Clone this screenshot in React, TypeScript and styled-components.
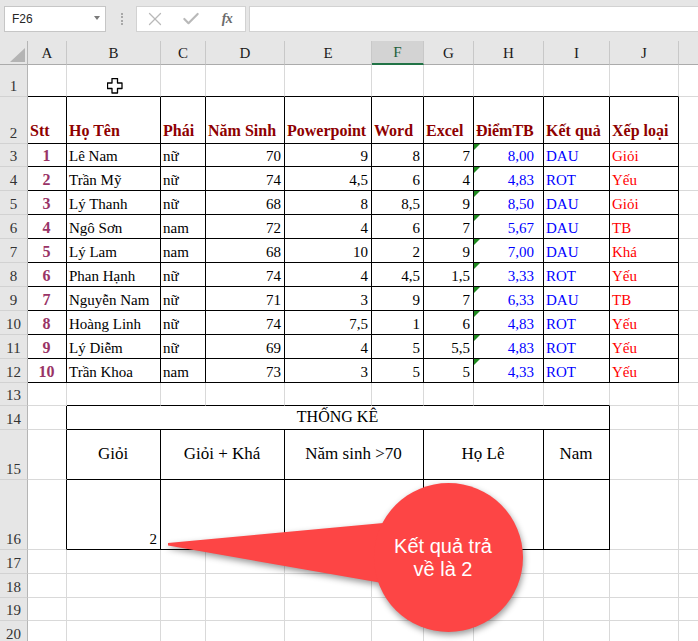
import React from 'react';
import styled, { createGlobalStyle } from 'styled-components';
import { X, Check } from 'lucide-react';

const GRID = '#d9d9d9';
const INK = '#000000';

const COLS = [28, 39, 94, 45, 79, 87, 52, 50, 70, 66, 69, 60];
const LETTERS = ['A', 'B', 'C', 'D', 'E', 'F', 'G', 'H', 'I', 'J', ''];
const ROW_HEIGHTS = [32, 47, 23, 24, 24, 24, 24, 24, 24, 24, 24, 24, 23, 24, 50, 70, 24, 24, 23, 24];

const GlobalStyle = createGlobalStyle`
  html, body { margin: 0; padding: 0; background: #fff; overflow: hidden; }
`;

const Screen = styled.div`
  position: relative;
  width: 698px;
  height: 641px;
  overflow: hidden;
  background: #fff;
  font-family: "Liberation Serif", "Times New Roman", serif;
`;

const TopBar = styled.div`
  height: 41px;
  box-sizing: border-box;
  background: #e6e6e6;
  display: flex;
  align-items: flex-start;
  padding: 6px 0 0 4px;
`;

const NameBox = styled.div`
  width: 102px;
  height: 26px;
  box-sizing: border-box;
  flex: none;
  background: #fff;
  border: 1px solid #c6c6c6;
  display: flex;
  align-items: center;
  justify-content: space-between;
  padding: 0 5px 0 7px;
  font-family: "Liberation Sans", Arial, sans-serif;
  font-size: 12px;
  color: #262626;
`;

const DropArrow = styled.span`
  width: 0;
  height: 0;
  border-left: 3.5px solid transparent;
  border-right: 3.5px solid transparent;
  border-top: 4px solid #7a7a7a;
  margin-top: -2px;
`;

const Dots = styled.span`
  flex: none;
  width: 0;
  height: 12px;
  margin: 7px 13px 0 15px;
  border-left: 2px dotted #a8a8a8;
`;

const FxBox = styled.div`
  flex: none;
  width: 110px;
  height: 26px;
  box-sizing: border-box;
  background: #fff;
  border: 1px solid #d2d2d2;
  display: flex;
  align-items: center;
`;

const FxButton = styled.span`
  width: 36px;
  display: flex;
  justify-content: center;
  align-items: center;
  color: #b9b9b9;
`;

const FxLabel = styled.span`
  font-family: "Liberation Serif", "Times New Roman", serif;
  font-style: italic;
  font-weight: bold;
  font-size: 14px;
  color: #6b6b6b;
  letter-spacing: -0.5px;
`;

const FormulaInput = styled.div`
  flex: 1;
  height: 26px;
  box-sizing: border-box;
  margin-left: 3px;
  background: #fff;
  border: 1px solid #d2d2d2;
  border-right: none;
`;

const Sheet = styled.div`
  display: grid;
  grid-template-columns: ${COLS.map((w) => `${w}px`).join(' ')};
  grid-template-rows: 24px ${ROW_HEIGHTS.map((h) => `${h}px`).join(' ')};
`;

const Corner = styled.div`
  position: relative;
  box-sizing: border-box;
  background: #e6e6e6;
  border-right: 1px solid #b5b5b5;
  border-bottom: 1px solid #ababab;
  &::after {
    content: '';
    position: absolute;
    right: 2px;
    bottom: 2px;
    width: 0;
    height: 0;
    border-left: 15px solid transparent;
    border-bottom: 14px solid #b4b4b4;
  }
`;

const ColHead = styled.div<{ $active?: boolean }>`
  box-sizing: border-box;
  display: flex;
  align-items: center;
  justify-content: center;
  background: ${(p) => (p.$active ? '#d3d3d3' : '#e6e6e6')};
  border-right: 1px solid #c8c8c8;
  border-bottom: ${(p) => (p.$active ? '2px solid #217346' : '1px solid #ababab')};
  font-size: 15px;
  color: ${(p) => (p.$active ? '#1d5f3a' : '#1a1a1a')};
  padding-top: 1px;
`;

const RowHead = styled.div`
  box-sizing: border-box;
  display: flex;
  align-items: flex-end;
  justify-content: center;
  background: #e6e6e6;
  border-right: 1px solid #b5b5b5;
  border-bottom: 1px solid #d2d2d2;
  font-size: 15px;
  line-height: 18px;
  padding-bottom: 1px;
  color: #333;
`;

type Tone = 'plain' | 'head' | 'stt' | 'blue' | 'red' | 'score';
type Align = 'left' | 'right' | 'center';

const TONE_COLOR: Record<Tone, string> = {
  plain: '#000',
  head: '#8e0000',
  stt: '#993366',
  blue: '#0000ff',
  red: '#ff0000',
  score: '#0000ff',
};

const Cell = styled.div<{
  $span: number;
  $right: string;
  $bottom: string;
  $align: Align;
  $middle: boolean;
  $tone: Tone;
  $size?: number;
}>`
  grid-column: span ${(p) => p.$span};
  position: relative;
  box-sizing: border-box;
  min-width: 0;
  display: flex;
  align-items: ${(p) => (p.$middle ? 'center' : 'flex-end')};
  justify-content: ${(p) =>
    p.$align === 'right' ? 'flex-end' : p.$align === 'center' ? 'center' : 'flex-start'};
  border-right: 1px solid ${(p) => p.$right};
  border-bottom: 1px solid ${(p) => p.$bottom};
  padding: 0 ${(p) => (p.$tone === 'score' ? 9 : 3)}px ${(p) => (p.$tone === 'head' ? 3 : 1)}px 2px;
  font-size: ${(p) => p.$size ?? (p.$tone === 'head' || p.$tone === 'stt' ? 16 : 15)}px;
  font-weight: ${(p) => (p.$tone === 'head' || p.$tone === 'stt' ? 'bold' : 'normal')};
  line-height: 18px;
  color: ${(p) => TONE_COLOR[p.$tone]};
  white-space: nowrap;
  background: #fff;
`;

const ErrMark = styled.span`
  position: absolute;
  top: 0;
  left: 0;
  width: 0;
  height: 0;
  border-top: 6px solid #1f8a1f;
  border-right: 6px solid transparent;
`;

const CursorMark = styled.svg`
  position: absolute;
  left: 40px;
  top: 13px;
`;

const CalloutLayer = styled.div`
  position: absolute;
  inset: 0;
  pointer-events: none;
`;

const CalloutShape = styled.svg`
  position: absolute;
  left: 0;
  top: 0;
  filter: drop-shadow(1px 3px 3px rgba(0, 0, 0, 0.4));
`;

const CalloutText = styled.div`
  position: absolute;
  left: 363px;
  top: 535px;
  width: 160px;
  text-align: center;
  font-family: "Liberation Sans", Arial, sans-serif;
  font-size: 20px;
  line-height: 23px;
  color: #ffffff;
`;

interface Spec {
  text?: string;
  span?: number;
  align?: Align;
  middle?: boolean;
  tone?: Tone;
  size?: number;
  err?: boolean;
  cursor?: boolean;
}

const STUDENTS: string[][] = [
  ['1', 'Lê Nam', 'nữ', '70', '9', '8', '7', '8,00', 'DAU', 'Giỏi'],
  ['2', 'Trần Mỹ', 'nữ', '74', '4,5', '6', '4', '4,83', 'ROT', 'Yếu'],
  ['3', 'Lý Thanh', 'nữ', '68', '8', '8,5', '9', '8,50', 'DAU', 'Giỏi'],
  ['4', 'Ngô Sơn', 'nam', '72', '4', '6', '7', '5,67', 'DAU', 'TB'],
  ['5', 'Lý Lam', 'nam', '68', '10', '2', '9', '7,00', 'DAU', 'Khá'],
  ['6', 'Phan Hạnh', 'nữ', '74', '4', '4,5', '1,5', '3,33', 'ROT', 'Yếu'],
  ['7', 'Nguyễn Nam', 'nữ', '71', '3', '9', '7', '6,33', 'DAU', 'TB'],
  ['8', 'Hoàng Linh', 'nữ', '74', '7,5', '1', '6', '4,83', 'ROT', 'Yếu'],
  ['9', 'Lý Diễm', 'nữ', '69', '4', '5', '5,5', '4,83', 'ROT', 'Yếu'],
  ['10', 'Trần Khoa', 'nam', '73', '3', '5', '5', '4,33', 'ROT', 'Yếu'],
];

const HEADERS = ['Stt', 'Họ Tên', 'Phái', 'Năm Sinh', 'Powerpoint', 'Word', 'Excel', 'ĐiểmTB', 'Kết quả', 'Xếp loại'];

const blanks = (n: number): Spec[] => Array.from({ length: n }, () => ({}));

function buildRow(r: number): Spec[] {
  if (r === 1) return [{}, { cursor: true }, ...blanks(9)];
  if (r === 2) return [...HEADERS.map((t) => ({ text: t, tone: 'head' as Tone })), {}];
  if (r >= 3 && r <= 12) {
    const s = STUDENTS[r - 3];
    return [
      { text: s[0], tone: 'stt', align: 'center' },
      { text: s[1] },
      { text: s[2] },
      { text: s[3], align: 'right' },
      { text: s[4], align: 'right' },
      { text: s[5], align: 'right' },
      { text: s[6], align: 'right' },
      { text: s[7], align: 'right', tone: 'score', err: true },
      { text: s[8], tone: 'blue' },
      { text: s[9], tone: 'red' },
      {},
    ];
  }
  if (r === 14) return [{}, { text: 'THỐNG KÊ', span: 8, align: 'center', middle: true, size: 16 }, {}, {}];
  if (r === 15) {
    const c = { align: 'center' as Align, middle: true, size: 17 };
    return [
      {},
      { text: 'Giỏi', ...c },
      { text: 'Giỏi + Khá', span: 2, ...c },
      { text: 'Năm sinh >70', span: 2, ...c },
      { text: 'Họ Lê', span: 2, ...c },
      { text: 'Nam', ...c },
      {},
      {},
    ];
  }
  if (r === 16) return [{}, { text: '2', align: 'right' }, { span: 2 }, { span: 2 }, { span: 2 }, {}, {}, {}];
  return blanks(11);
}

function rightColor(r: number, end: number): string {
  if (r >= 2 && r <= 12 && end >= 1 && end <= 10) return INK;
  if (r >= 14 && r <= 16) {
    if (end === 1) return INK;
    if (r === 14 && end === 9) return INK;
    if (r > 14 && [2, 4, 6, 8, 9].includes(end)) return INK;
  }
  return GRID;
}

function bottomColor(r: number, start: number, end: number): string {
  if (r >= 1 && r <= 12 && start >= 1 && end <= 10) return INK;
  if (r >= 13 && r <= 16 && start >= 2 && end <= 9) return INK;
  return GRID;
}

const Cursor = () => (
  <CursorMark width="16" height="16" viewBox="0 0 16 16">
    <polygon
      points="5,0.5 10.5,0.5 10.5,5 15,5 15,10.5 10.5,10.5 10.5,15 5,15 5,10.5 0.5,10.5 0.5,5 5,5"
      fill="#fff"
      stroke="#000"
      strokeWidth="1.3"
      strokeLinejoin="round"
    />
  </CursorMark>
);

export default function App() {
  return (
    <Screen>
      <GlobalStyle />
      <TopBar>
        <NameBox>
          <span>F26</span>
          <DropArrow />
        </NameBox>
        <Dots />
        <FxBox>
          <FxButton>
            <X size={22} strokeWidth={1.4} />
          </FxButton>
          <FxButton>
            <Check size={20} strokeWidth={2.6} />
          </FxButton>
          <FxButton>
            <FxLabel>fx</FxLabel>
          </FxButton>
        </FxBox>
        <FormulaInput />
      </TopBar>
      <Sheet>
        <Corner />
        {LETTERS.map((l, i) => (
          <ColHead key={i} $active={l === 'F'}>
            {l}
          </ColHead>
        ))}
        {ROW_HEIGHTS.map((_, i) => {
          const r = i + 1;
          let col = 1;
          return (
            <React.Fragment key={r}>
              <RowHead>{r}</RowHead>
              {buildRow(r).map((s, k) => {
                const span = s.span ?? 1;
                const start = col;
                const end = start + span - 1;
                col = end + 1;
                return (
                  <Cell
                    key={k}
                    $span={span}
                    $right={rightColor(r, end)}
                    $bottom={bottomColor(r, start, end)}
                    $align={s.align ?? 'left'}
                    $middle={!!s.middle}
                    $tone={s.tone ?? 'plain'}
                    $size={s.size}
                  >
                    {s.err && <ErrMark />}
                    {s.cursor && <Cursor />}
                    {s.text}
                  </Cell>
                );
              })}
            </React.Fragment>
          );
        })}
      </Sheet>
      <CalloutLayer>
        <CalloutShape width="698" height="641" viewBox="0 0 698 641">
          <path d="M168 543 L405 521 L405 587 L168 545.5 Z" fill="#fd4545" />
          <circle cx="448.5" cy="557.5" r="74.5" fill="#fd4545" />
        </CalloutShape>
        <CalloutText>
          Kết quả trả
          <br />
          về là 2
        </CalloutText>
      </CalloutLayer>
    </Screen>
  );
}
